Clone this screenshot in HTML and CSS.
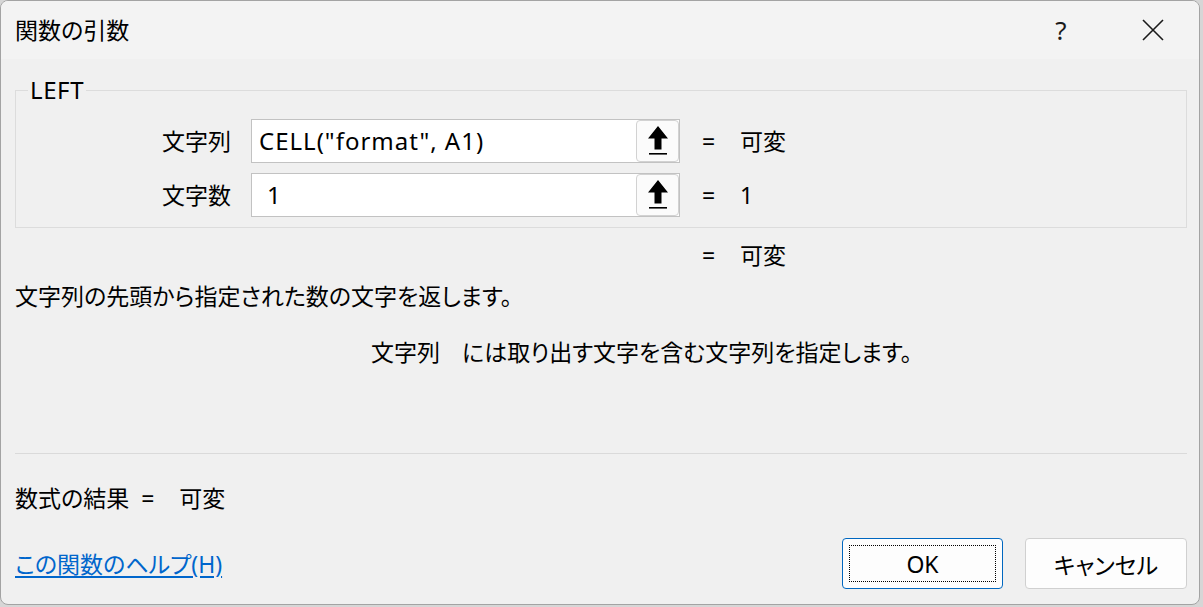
FILE: index.html
```html
<!DOCTYPE html>
<html lang="ja">
<head>
    <meta charset="UTF-8">
    <meta name="viewport" content="width=device-width, initial-scale=1.0">
    <title>関数の引数</title>
<link rel="stylesheet" href="styles.css">
</head>
<body>
<div class="dialog">
    <div class="titlebar">
        <span class="title">関数の引数</span>
        <span class="cap-btn help">?</span>
        <span class="cap-btn close">
            <svg width="22" height="22" viewBox="0 0 22 22"><path d="M1 1L21 21M21 1L1 21" stroke="#1a1a1a" stroke-width="1.6" fill="none"/></svg>
        </span>
    </div>

    <div class="main">
        <fieldset class="group">
            <legend>LEFT</legend>
            <div class="args">
                <div class="arg-row">
                    <span class="arg-label">文字列</span>
                    <div class="arg-input">
                        <span class="arg-text">CELL("format", A1)</span>
                        <span class="ref-btn"><svg width="22" height="30" viewBox="0 0 22 30"><path d="M11 0L21 12.5H14.5V23.5H7.5V12.5H1Z" fill="#000"/><rect x="2" y="27" width="18" height="1.6" fill="#000"/></svg></span>
                    </div>
                    <span class="eq">=</span>
                    <span class="arg-value">可変</span>
                </div>
                <div class="arg-row">
                    <span class="arg-label">文字数</span>
                    <div class="arg-input">
                        <span class="arg-text num">1</span>
                        <span class="ref-btn"><svg width="22" height="30" viewBox="0 0 22 30"><path d="M11 0L21 12.5H14.5V23.5H7.5V12.5H1Z" fill="#000"/><rect x="2" y="27" width="18" height="1.6" fill="#000"/></svg></span>
                    </div>
                    <span class="eq">=</span>
                    <span class="arg-value">1</span>
                </div>
            </div>
        </fieldset>

        <div class="result-row"><span class="eq">=</span><span>可変</span></div>

        <p class="desc">文字列の先頭から指定された数の文字を返します。</p>
        <p class="arg-desc"><span class="arg-name">文字列</span>には取り出す文字を含む文字列を指定します。</p>

        <hr class="sep">

        <div class="formula-result"><span>数式の結果</span><span class="eq-inline">=</span><span>可変</span></div>

        <div class="footer">
            <a class="help-link" href="#">この関数のヘルプ(H)</a>
            <div class="buttons">
                <button class="btn primary"><span class="focus">OK</span></button>
                <button class="btn">キャンセル</button>
            </div>
        </div>
    </div>
</div>
</body>
</html>
```

FILE: styles.css
```css
* {box-sizing: border-box;}
body {margin: 0;background: #d6d6d6;font-family: "Noto Sans", "Noto Sans CJK JP", sans-serif;font-size: 23px;color: #000;font-feature-settings: "palt";}

.dialog {width: 1200px;height: 605px;border: 1px solid #a3a3a3;border-radius: 8px;background: #f0f0f0;overflow: hidden;display: flex;flex-direction: column;}

/* タイトルバー */
.titlebar {height: 58px;flex: none;background: #f3f3f3;display: flex;align-items: center;padding-left: 14px;}
.title {flex: 1;line-height: 30px;}
.cap-btn {width: 92px;height: 58px;display: flex;align-items: center;justify-content: center;}
.help {font-size: 26px;color: #1a1a1a;}

.main {flex: 1;display: flex;flex-direction: column;padding: 0 12px 0 14px;}

/* 引数グループ */
.group {margin: 19px 0 0;padding: 17px 0 10px;border: 1px solid #dcdcdc;min-width: 0;}
.group legend {margin-left: 12px;padding: 0 2px;line-height: 24px;font-size: 24px;letter-spacing: 0.6px;}
.args {display: flex;flex-direction: column;gap: 10px;}
.arg-row {display: grid;grid-template-columns: 235px 429px 60px auto;align-items: center;height: 44px;line-height: 30px;}
.arg-label {text-align: right;padding-right: 20px;}
.arg-input {height: 44px;border: 1px solid #c2c2c2;background: #fff;display: flex;align-items: center;padding-left: 7px;}
.arg-text {flex: 1;white-space: nowrap;font-size: 24px;letter-spacing: 1px;}
.arg-text.num {padding-left: 8px;}
.ref-btn {width: 43px;height: 42px;border: 1px solid #d2d2d2;border-radius: 4px;background: #fbfbfb;display: flex;align-items: center;justify-content: center;}
.eq {padding-left: 22px;}

.result-row {margin-top: 12px;padding-left: 687px;display: flex;line-height: 30px;}
.result-row .eq {padding-left: 0;width: 38px;}

.desc {margin: 11px 0 0;line-height: 30px;}
.arg-desc {margin: 26px 0 0;padding-left: 356px;line-height: 30px;}
.arg-name {margin-right: 22px;}

.sep {margin: 86px 0 0;border: 0;border-top: 1px solid #dadada;height: 0;}

.formula-result {margin-top: 29px;line-height: 30px;display: flex;}
.eq-inline {margin: 0 25px 0 12px;}

/* フッター */
.footer {margin-top: 25px;display: flex;align-items: center;justify-content: space-between;}
.help-link {color: #0066cc;text-decoration: underline;text-underline-offset: 3px;line-height: 30px;}
.buttons {display: flex;gap: 22px;}
.btn {width: 161px;height: 51px;border: 1px solid #d0d0d0;border-radius: 4px;background: #fdfdfd;font: inherit;color: #000;padding: 0;}
.btn + .btn {width: 162px;}
.btn.primary {border-color: #0067c0;padding: 6px;}
.focus {display: flex;height: 100%;border: 1px dotted #000;align-items: center;justify-content: center;}
```
